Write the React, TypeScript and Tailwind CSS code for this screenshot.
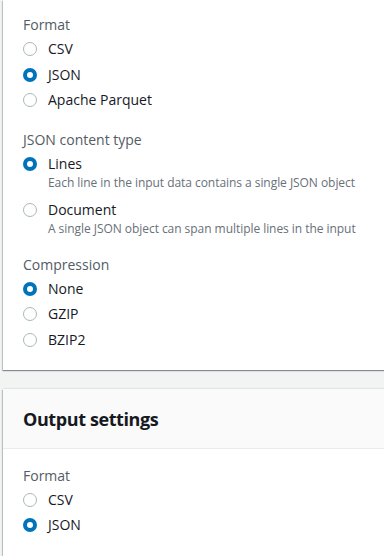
import React from "react";

type Option = { label: string; desc?: string };

function Radio({ checked }: { checked: boolean }) {
  if (checked) {
    return (
      <span className="flex h-[14px] w-[14px] shrink-0 items-center justify-center rounded-full bg-[#0073bb]">
        <span className="h-[6px] w-[6px] rounded-full bg-white" />
      </span>
    );
  }
  return <span className="h-[14px] w-[14px] shrink-0 rounded-full border-[1.5px] border-[#aab7b8] bg-white" />;
}

function RadioGroup({ label, options, selected }: { label: string; options: Option[]; selected: number }) {
  return (
    <div>
      <div className="leading-[22px] text-[#545b64]">{label}</div>
      <div className="mt-[2px] flex flex-col gap-[3.5px]">
        {options.map((o, i) => (
          <div key={o.label} className={o.desc && i > 0 ? "mt-[4px]" : ""}>
            <div className="flex items-center">
              <span className="flex w-[25px]">
                <Radio checked={i === selected} />
              </span>
              <span className="leading-[22px] text-[#16191f]">{o.label}</span>
            </div>
            {o.desc && (
              <div className="pl-[25px] text-[12px] leading-[16px] tracking-[-0.05px] text-[#687078]">{o.desc}</div>
            )}
          </div>
        ))}
      </div>
    </div>
  );
}

export default function App() {
  return (
    <div
      className="min-h-[556px] overflow-hidden bg-[#f2f3f3] pl-[3px] text-[14px]"
      style={{ fontFamily: '"Open Sans", "Noto Sans", Arial, sans-serif' }}
    >
      {/* Input card, top cut off */}
      <div className="mr-[-20px] bg-white pb-[19px] pl-[20px] pt-[14px] shadow-[0_1px_1px_0_rgba(0,28,36,0.35),-1px_1px_1px_0_rgba(0,28,36,0.18)]">
        <RadioGroup
          label="Format"
          selected={1}
          options={[{ label: "CSV" }, { label: "JSON" }, { label: "Apache Parquet" }]}
        />
        <div className="mt-[18px]">
          <RadioGroup
            label="JSON content type"
            selected={0}
            options={[
              { label: "Lines", desc: "Each line in the input data contains a single JSON object" },
              { label: "Document", desc: "A single JSON object can span multiple lines in the input" },
            ]}
          />
        </div>
        <div className="mt-[17px]">
          <RadioGroup
            label="Compression"
            selected={0}
            options={[{ label: "None" }, { label: "GZIP" }, { label: "BZIP2" }]}
          />
        </div>
      </div>

      {/* Output settings card */}
      <div className="mr-[-20px] mt-[19px] bg-white shadow-[0_1px_1px_0_rgba(0,28,36,0.35),-1px_1px_1px_0_rgba(0,28,36,0.18),0_-1px_1px_0_rgba(0,28,36,0.06)]">
        <div className="border-b border-[#eaeded] bg-[#fafafa] px-[20px] pb-[17px] pt-[18px]">
          <h2 className="text-[18px] font-bold leading-[24px] tracking-[-0.4px] text-[#16191f]">Output settings</h2>
        </div>
        <div className="pb-[20px] pl-[20px] pt-[16px]">
          <RadioGroup label="Format" selected={1} options={[{ label: "CSV" }, { label: "JSON" }]} />
        </div>
      </div>
    </div>
  );
}
